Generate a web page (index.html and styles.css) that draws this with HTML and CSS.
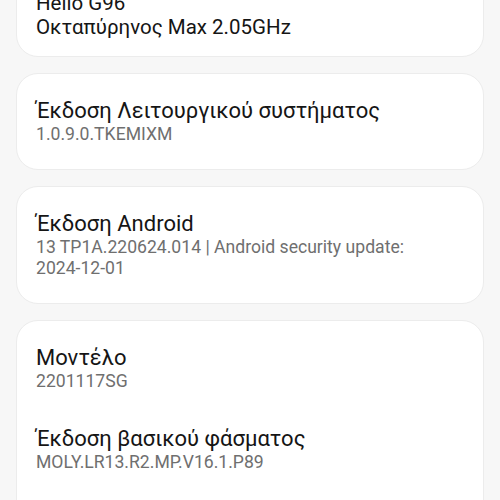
FILE: index.html
```html
<!DOCTYPE html>
<html lang="el">
<head>
    <meta charset="UTF-8">
    <meta name="viewport" content="width=device-width, initial-scale=1.0">
    <title>Όλες οι προδιαγραφές</title>
    <link rel="stylesheet" href="styles.css">
</head>
<body>

    <div class="lista">

        <!-- Επεξεργαστής (το πάνω μέρος έχει κυλήσει εκτός οθόνης) -->
        <div class="karta">
            <div class="stoixeio stoixeio-cpu">
                <p class="titlos">Επεξεργαστής</p>
                <p class="timi-megali">Helio G96</p>
                <p class="timi-megali">Οκταπύρηνος Max 2.05GHz</p>
            </div>
        </div>

        <div class="karta">
            <div class="stoixeio">
                <p class="titlos">Έκδοση Λειτουργικού συστήματος</p>
                <p class="timi">1.0.9.0.TKEMIXM</p>
            </div>
        </div>

        <div class="karta">
            <div class="stoixeio">
                <p class="titlos">Έκδοση Android</p>
                <p class="timi">13 TP1A.220624.014 | Android security update: <span class="imerominia">2024-12-01</span></p>
            </div>
        </div>

        <div class="karta">
            <div class="stoixeio">
                <p class="titlos">Μοντέλο</p>
                <p class="timi">2201117SG</p>
            </div>
            <div class="stoixeio">
                <p class="titlos">Έκδοση βασικού φάσματος</p>
                <p class="timi">MOLY.LR13.R2.MP.V16.1.P89</p>
            </div>
            <div class="stoixeio">
                <p class="titlos">Έκδοση Kernel</p>
                <p class="timi">4.19.191-gd2b2b1f</p>
            </div>
        </div>

    </div>

</body>
</html>
```

FILE: styles.css
```css
body {
    font-family: Roboto, "Noto Sans", sans-serif;
    background-color: #f7f7f7;
    margin: 0;
    padding: 0 16px;
    height: 500px;
    overflow: hidden;
}

p {
    margin: 0;
}

.lista {
    display: flex;
    flex-direction: column;
    gap: 16px;
    margin-top: -60px;
}

.karta {
    background-color: #ffffff;
    border: 1px solid #ececec;
    border-radius: 22px;
    padding: 24px 19px 24px;
    display: flex;
    flex-direction: column;
    gap: 34px;
}

.stoixeio {
    display: flex;
    flex-direction: column;
}

.stoixeio-cpu {
    margin-bottom: -7px;
}

.titlos {
    font-size: 22px;
    line-height: 26px;
    color: #151515;
}

.timi {
    font-size: 17.6px;
    line-height: 21px;
    color: #6f6f6f;
}

.imerominia {
    white-space: nowrap;
}

.timi-megali {
    font-size: 20.5px;
    line-height: 24px;
    color: #151515;
}
```
